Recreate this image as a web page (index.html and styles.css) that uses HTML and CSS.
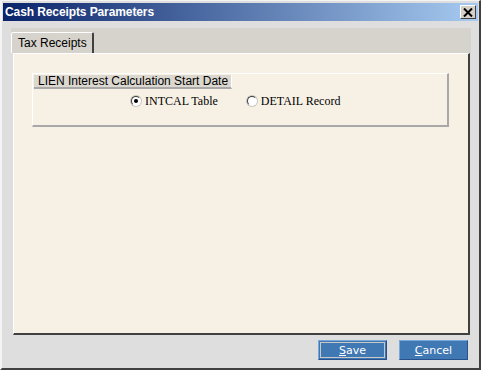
FILE: index.html
```html
<!DOCTYPE html>
<html>
<head>
<meta charset="utf-8">
<link rel="stylesheet" href="styles.css">
</head>
<body>
<div class="window">
  <div class="titlebar">
    <span class="title">Cash Receipts Parameters</span>
    <span class="close">
      <svg width="10" height="9" viewBox="0 0 10 9"><path d="M1 0.5 L9 8.5 M9 0.5 L1 8.5" stroke="#000" stroke-width="2"/></svg>
    </span>
  </div>
  <div class="tabstrip">
    <div class="tab">Tax Receipts</div>
  </div>
  <div class="panel">
    <div class="group">
      <div class="legend">LIEN Interest Calculation Start Date</div>
      <div class="radios">
        <label class="radio"><span class="dot checked"></span>INTCAL Table</label>
        <label class="radio"><span class="dot"></span>DETAIL Record</label>
      </div>
    </div>
  </div>
  <div class="footer">
    <button class="btn focus"><u>S</u>ave</button>
    <button class="btn"><u>C</u>ancel</button>
  </div>
</div>
</body>
</html>
```

FILE: styles.css
```css
html, body {
  margin: 0;
  padding: 0;
  background: #dcdcdc;
}
.window {
  width: 481px;
  height: 370px;
  box-sizing: border-box;
  background: #dedede;
  border-style: solid;
  border-width: 1px 2px 2px 2px;
  border-color: #f4f4f4 #404040 #404040 #f4f4f4;
  display: flex;
  flex-direction: column;
}
.titlebar {
  margin: 2px 1px 0 1px;
  height: 18px;
  background: linear-gradient(to right, #0a246a, #a6caf0);
  display: flex;
  align-items: center;
  justify-content: space-between;
  padding: 0 2px 0 2px;
}
.title {
  font-family: "Liberation Sans", Arial, sans-serif;
  font-weight: bold;
  font-size: 12px;
  color: #fff;
  letter-spacing: -0.1px;
}
.close {
  width: 14px;
  height: 12px;
  background: #d4d0c8;
  border: 1px solid;
  border-color: #fff #404040 #404040 #fff;
  display: flex;
  align-items: center;
  justify-content: center;
}
.tabstrip {
  margin: 7px 8px 0 9px;
  height: 25px;
  background: #d6d3cc;
  display: flex;
  align-items: flex-end;
}
.tab {
  height: 21px;
  width: 83px;
  box-sizing: border-box;
  background: #d6d3cc;
  border-style: solid;
  border-width: 1px 2px 0 1px;
  border-color: #fff #404040 transparent #fff;
  border-radius: 2px 2px 0 0;
  font-family: "Liberation Sans", Arial, sans-serif;
  font-size: 12px;
  color: #000;
  padding: 3px 0 0 6px;
}
.panel {
  margin: 0 9px 0 11px;
  height: 282px;
  box-sizing: border-box;
  background: #f7f1e5;
  border-style: solid;
  border-width: 1px 2px 2px 1px;
  border-color: #fff #404040 #404040 #fff;
  padding: 19px 0 0 18px;
}
.group {
  width: 417px;
  height: 54px;
  box-sizing: border-box;
  border-style: solid;
  border-width: 1px 2px 2px 1px;
  border-color: #fff #a8a8a8 #a8a8a8 #fff;
  padding: 1px 0 0 1px;
}
.legend {
  display: block;
  width: fit-content;
  height: 14px;
  box-sizing: border-box;
  padding: 0 3px 0 4px;
  background: #dcd8d0;
  border-bottom: 2px solid #a8a8a8;
  border-right: 1px solid #fff;
  font-family: "Liberation Sans", Arial, sans-serif;
  font-size: 12px;
  line-height: 12px;
  color: #000;
}
.radios {
  display: flex;
  gap: 29px;
  padding: 5px 0 0 97px;
}
.radio {
  display: flex;
  align-items: center;
  gap: 4px;
  height: 14px;
  font-family: "Liberation Serif", "Times New Roman", serif;
  font-size: 12px;
  color: #000;
}
.dot {
  width: 10px;
  height: 10px;
  box-sizing: border-box;
  border-radius: 50%;
  border: 1px solid;
  border-color: #404040 #fff #fff #404040;
  background: #fff;
  box-shadow: 0 0 0 1px #c8c4bc;
  position: relative;
}
.dot.checked::after {
  content: "";
  position: absolute;
  left: 2px;
  top: 2px;
  width: 4px;
  height: 4px;
  border-radius: 50%;
  background: #000;
}
.footer {
  display: flex;
  justify-content: flex-end;
  gap: 12px;
  padding: 5px 11px 0 0;
}
.btn {
  width: 69px;
  height: 20px;
  box-sizing: border-box;
  background: #4078b4;
  border: 1px solid;
  border-color: #78a8d8 #28508c #28508c #78a8d8;
  color: #fff;
  font-family: "DejaVu Sans", Verdana, sans-serif;
  font-size: 11px;
  padding: 0;
  margin: 0;
}
.btn.focus {
  outline: 1px solid #c8c8c8;
  outline-offset: -3px;
}
```
